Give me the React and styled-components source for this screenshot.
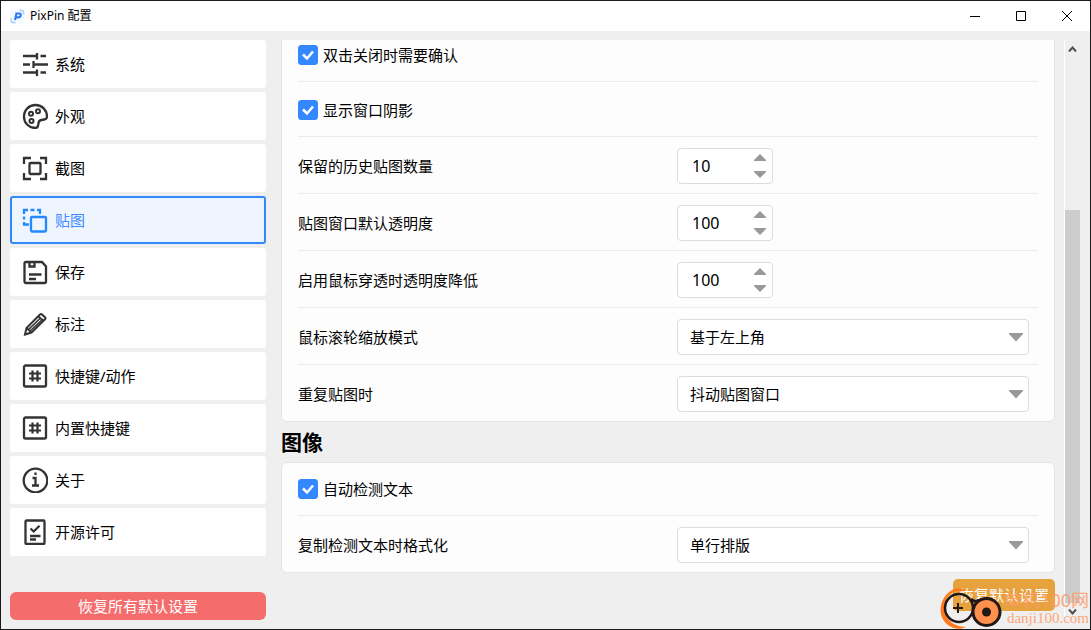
import React, { useState } from "react";
import styled, { createGlobalStyle, css } from "styled-components";

const GlobalStyle = createGlobalStyle`
  *, *::before, *::after { box-sizing: border-box; }
  body {
    margin: 0;
    font-family: "Noto Sans", "Noto Sans CJK SC", sans-serif;
    font-size: 15px;
    line-height: 20px;
    color: #000;
  }
  button, input, select { font: inherit; color: inherit; }
`;

const Window = styled.div`
  position: relative;
  height: 100vh;
  display: flex;
  flex-direction: column;
  border: 1px solid #1a1a1a;
  background: #efefef;
  overflow: hidden;
`;

const TitleBar = styled.header`
  flex: none;
  height: 30px;
  display: flex;
  align-items: center;
  gap: 5px;
  padding-left: 9px;
  background: #fff;
`;

const Title = styled.h1`
  flex: 1;
  margin: 0;
  font-size: 12px;
  font-weight: 400;
`;

const WindowButtons = styled.div`
  display: flex;
`;

const WindowButton = styled.button`
  width: 46px;
  height: 30px;
  padding: 0;
  border: 0;
  background: none;
  display: grid;
  place-items: center;
`;

const Body = styled.div`
  flex: 1;
  min-height: 0;
  display: flex;
  padding: 9px;
`;

const Sidebar = styled.aside`
  flex: none;
  width: 256px;
  display: flex;
  flex-direction: column;
  justify-content: space-between;
  margin-right: 15px;
`;

const Nav = styled.nav`
  display: flex;
  flex-direction: column;
  gap: 4px;
`;

const NavItem = styled.button`
  display: flex;
  align-items: center;
  gap: 7px;
  height: 48px;
  padding: 0 10px;
  border: 2px solid #fff;
  border-radius: 3px;
  background: #fff;
  text-align: left;
  svg { flex: none; color: #333; }
  ${(p) =>
    p.$active &&
    css`
      border-color: #3388ff;
      background: #eef5ff;
      color: #3f8cff;
      svg { color: #2488ff; }
    `}
`;

const ResetAll = styled.button`
  height: 28px;
  padding: 0;
  border: 0;
  border-radius: 6px;
  background: #f56c6c;
  color: #fff;
`;

const Pane = styled.main`
  flex: 1;
  min-width: 0;
  display: flex;
  flex-direction: column-reverse;
  overflow-y: auto;
  scrollbar-width: none;
  margin-right: 9px;
`;

const PaneContent = styled.div`
  display: flex;
  flex-direction: column;
  padding-bottom: 9px;
`;

const Card = styled.section`
  display: flex;
  flex-direction: column;
  gap: 2px;
  padding: 0 16px;
  border: 1px solid #e4e4e4;
  border-radius: 6px;
  background: #fdfdfd;
`;

const SectionTitle = styled.h2`
  margin: 0;
  font-size: 21px;
  line-height: 40px;
  font-weight: 700;
`;

const Row = styled.div`
  display: grid;
  grid-template-columns: 379fr 352fr;
  align-items: center;
  padding: 9px 9px 9px 0;
  &:not(:last-child) { border-bottom: 1px solid #ebebeb; }
`;

const CheckRow = styled.label`
  display: flex;
  align-items: center;
  gap: 5px;
  padding: 16px 0;
  border-bottom: 1px solid #ebebeb;
`;

const CheckMark = styled.span`
  position: relative;
  width: 20px;
  height: 20px;
  input {
    appearance: none;
    display: block;
    width: 20px;
    height: 20px;
    margin: 0;
    border: 1px solid #3388ff;
    border-radius: 3px;
    background: #fff;
  }
  input:checked { background: #3388ff; }
  svg {
    position: absolute;
    inset: 0;
    pointer-events: none;
  }
`;

const Spin = styled.div`
  width: 96px;
  height: 36px;
  display: flex;
  border: 1px solid #dcdcdc;
  border-radius: 4px;
  background: #fff;
`;

const SpinInput = styled.input`
  flex: 1;
  min-width: 0;
  padding: 0 0 0 14px;
  border: 0;
  outline: 0;
  background: none;
  font-size: 16px;
`;

const SpinButtons = styled.div`
  display: flex;
  flex-direction: column;
  width: 24px;
`;

const SpinButton = styled.button`
  flex: 1;
  padding: 0;
  border: 0;
  background: none;
  display: grid;
  place-items: center;
`;

const SelectBox = styled.div`
  position: relative;
  select {
    appearance: none;
    display: block;
    width: 100%;
    height: 36px;
    padding: 0 32px 0 12px;
    border: 1px solid #dcdcdc;
    border-radius: 4px;
    background: #fff;
  }
  svg {
    position: absolute;
    right: 5px;
    top: 14px;
    pointer-events: none;
  }
`;

const ResetPage = styled.button`
  align-self: flex-end;
  height: 32px;
  margin-top: 6px;
  padding: 0 6px;
  border: 0;
  border-radius: 5px;
  background: #e6a23c;
  color: #fff;
`;

const ScrollTrack = styled.div`
  flex: none;
  width: 17px;
  display: flex;
  flex-direction: column;
  border-left: 1px solid #fff;
`;

const ScrollArrow = styled.button`
  width: 15px;
  height: 17px;
  padding: 0;
  border: 0;
  background: none;
  display: grid;
  place-items: center;
`;

const ScrollSpace = styled.div`
  flex: 153;
`;

const ScrollThumb = styled.div`
  flex: 393;
  width: 15px;
  background: #cdcdcd;
`;

const Watermark = styled.div`
  position: absolute;
  right: 1px;
  bottom: 0;
  display: flex;
  align-items: center;
  pointer-events: none;
`;

const WatermarkText = styled.div`
  display: flex;
  flex-direction: column;
  align-items: flex-end;
  color: #ff9a66;
  opacity: 0.85;
  strong { font-size: 18px; line-height: 20px; font-weight: 400; }
  span { font-family: "Liberation Serif", serif; font-size: 15px; line-height: 16px; }
`;

const Icon = ({ children }) => (
  <svg width="26" height="26" viewBox="0 0 26 26" fill="none" stroke="currentColor" strokeWidth="2.3" aria-hidden="true">
    {children}
  </svg>
);

const HashIcon = () => (
  <Icon>
    <rect x="2" y="2.5" width="22" height="21" rx="1.5" />
    <path d="M10.5 7.5v11M15.5 7.5v11M7 10.500h12M7 15.500h12" strokeWidth="2.200" />
  </Icon>
);

const icons = {
  system: (
    <Icon>
      <path d="M1 5h14M18.500 5H24M15 2v6.500M1 13.500h7M11.500 13.500H26M11.500 10v7M1 21.500h14M18.500 21.500H24M15 18.500V25" />
    </Icon>
  ),
  look: (
    <Icon>
      <path d="M13.500 25C7 25 2 20 2 13.700 2 7 7 2 13.500 2 20 2 25 7 25 13.500c0 1.800-1 2.800-2.700 3l-3 .5c-1.800.3-2.500 1.200-2.800 3l-.3 2.200c-.2 1.800-1.200 2.800-2.900 2.800z" />
      <circle cx="9" cy="10.700" r="2" strokeWidth="2" />
      <circle cx="16" cy="8.200" r="2" strokeWidth="2" />
      <circle cx="9.500" cy="18" r="2" strokeWidth="2" />
    </Icon>
  ),
  shot: (
    <Icon>
      <path d="M2 9V3h7M18 3h6v6M24 18v6h-6M9 24H2v-6" />
      <rect x="7.500" y="8" width="11" height="11" rx="1" />
    </Icon>
  ),
  pin: (
    <Icon>
      <path d="M2 7V3h4M8.500 3h4M15 3h3v4M2 9.500v3M2 15v2.500h5" />
      <rect x="9" y="10" width="15" height="14.500" rx="1" />
    </Icon>
  ),
  save: (
    <Icon>
      <path d="M4 3h16l4 4.500v15q0 1.500-1.500 1.500H4q-1.500 0-1.500-1.500v-18Q2.500 3 4 3z" />
      <path d="M7.500 3v4.500h5V3M7 15.500h12.500M7 20h7" />
    </Icon>
  ),
  pen: (
    <Icon>
      <path d="M3 23.500l1.500-6.500L18 3.500q1-1 2 0l3 2.800q1 1 0 2L9.500 21.500z" strokeWidth="2" />
      <path d="M4.500 17l5 4.500M6.500 18.500L19 6.500M8 20L21 8M16 5l5.500 5M3 23.500l3-1" strokeWidth="1.700" />
    </Icon>
  ),
  hash: <HashIcon />,
  info: (
    <Icon>
      <circle cx="13.500" cy="13.500" r="11.800" />
      <path d="M10.500 11h3v7.500M10 18.500h7M13.500 5.500V8" />
    </Icon>
  ),
  license: (
    <Icon>
      <rect x="3.500" y="1.500" width="19" height="23.500" rx="1" />
      <path d="M8.500 9.500l3.200 3 5.800-5.800M8 17h10.500M8 20.500h6" />
    </Icon>
  ),
};

const navItems = [
  ["系统", "system"],
  ["外观", "look"],
  ["截图", "shot"],
  ["贴图", "pin"],
  ["保存", "save"],
  ["标注", "pen"],
  ["快捷键/动作", "hash"],
  ["内置快捷键", "hash"],
  ["关于", "info"],
  ["开源许可", "license"],
];

function Check({ children }) {
  return (
    <CheckRow>
      <CheckMark>
        <input type="checkbox" defaultChecked />
        <svg width="20" height="20" viewBox="0 0 20 20" fill="none" stroke="#fff" strokeWidth="2.5" aria-hidden="true">
          <path d="M5 9.500l4 4 6-7" />
        </svg>
      </CheckMark>
      {children}
    </CheckRow>
  );
}

function NumberField({ id, label, initial }) {
  const [value, setValue] = useState(initial);
  return (
    <Row>
      <label htmlFor={id}>{label}</label>
      <Spin>
        <SpinInput id={id} inputMode="numeric" value={value} onChange={(e) => setValue(Number(e.target.value) || 0)} />
        <SpinButtons>
          <SpinButton aria-label="增加" onClick={() => setValue(value + 1)}>
            <svg width="12" height="7" viewBox="0 0 12 7"><path d="M6 0l6 6v1H0V6z" fill="#999" /></svg>
          </SpinButton>
          <SpinButton aria-label="减少" onClick={() => setValue(value - 1)}>
            <svg width="12" height="7" viewBox="0 0 12 7"><path d="M0 0h12v1L6 7 0 1z" fill="#999" /></svg>
          </SpinButton>
        </SpinButtons>
      </Spin>
    </Row>
  );
}

function SelectField({ id, label, value }) {
  return (
    <Row>
      <label htmlFor={id}>{label}</label>
      <SelectBox>
        <select id={id} defaultValue={value}>
          <option>{value}</option>
        </select>
        <svg width="16" height="9" viewBox="0 0 16 9" aria-hidden="true">
          <path d="M1 0h14v1L8 8.500 1 1z" fill="#999" />
        </svg>
      </SelectBox>
    </Row>
  );
}

export default function App() {
  const [active, setActive] = useState("贴图");
  return (
    <Window>
      <GlobalStyle />
      <TitleBar>
        <svg width="15" height="15" viewBox="0 0 15 15" fill="none" aria-hidden="true">
          <rect x="0.500" y="0.500" width="14" height="14" rx="3" fill="#f6f9ff" />
          <path d="M9.500 1.500h2q2 0 2 2v2M1 9v2.500q0 2 2 2h2.500" stroke="#b5d3ff" strokeWidth="1.800" />
          <path d="M5 11l1.400-6.500H9q2 .1 1.700 1.900Q10.300 8.300 8.300 8.300H6" stroke="#2f7df6" strokeWidth="2.200" />
        </svg>
        <Title>PixPin 配置</Title>
        <WindowButtons>
          <WindowButton aria-label="最小化">
            <svg width="10" height="10" stroke="#000"><path d="M0 5.500h10" /></svg>
          </WindowButton>
          <WindowButton aria-label="最大化">
            <svg width="10" height="10" fill="none" stroke="#000"><path d="M.5.5h9v9h-9z" /></svg>
          </WindowButton>
          <WindowButton aria-label="关闭">
            <svg width="10" height="10" stroke="#000"><path d="M0 0l10 10M10 0L0 10" /></svg>
          </WindowButton>
        </WindowButtons>
      </TitleBar>
      <Body>
        <Sidebar>
          <Nav>
            {navItems.map(([label, icon]) => (
              <NavItem key={label} $active={label === active} onClick={() => setActive(label)}>
                {icons[icon]}
                {label}
              </NavItem>
            ))}
          </Nav>
          <ResetAll>恢复所有默认设置</ResetAll>
        </Sidebar>
        <Pane>
          <PaneContent>
            <Card>
              <Check>双击关闭时需要确认</Check>
              <Check>显示窗口阴影</Check>
              <NumberField id="history" label="保留的历史贴图数量" initial={10} />
              <NumberField id="opacity" label="贴图窗口默认透明度" initial={100} />
              <NumberField id="through" label="启用鼠标穿透时透明度降低" initial={100} />
              <SelectField id="wheel" label="鼠标滚轮缩放模式" value="基于左上角" />
              <SelectField id="repeat" label="重复贴图时" value="抖动贴图窗口" />
            </Card>
            <SectionTitle>图像</SectionTitle>
            <Card>
              <Check>自动检测文本</Check>
              <SelectField id="format" label="复制检测文本时格式化" value="单行排版" />
            </Card>
            <ResetPage>恢复默认设置</ResetPage>
          </PaneContent>
        </Pane>
        <ScrollTrack>
          <ScrollArrow aria-label="向上滚动">
            <svg width="9" height="6" fill="none" stroke="#505050" strokeWidth="2"><path d="M1 5.500l3.500-4 3.500 4" /></svg>
          </ScrollArrow>
          <ScrollSpace />
          <ScrollThumb />
          <ScrollArrow aria-label="向下滚动">
            <svg width="9" height="6" fill="none" stroke="#505050" strokeWidth="2"><path d="M1 .5l3.500 4L8 .5" /></svg>
          </ScrollArrow>
        </ScrollTrack>
      </Body>
      <Watermark>
        <svg width="66" height="42" viewBox="0 0 66 42" fill="none" aria-hidden="true">
          <path d="M28 4C22-1 14 1 8 8 0 18 1 31 10 38c5 4 12 5 18 2-9 0-17-4-20-12C4 17 9 6 20 4z" fill="#ff7a1a" />
          <circle cx="21" cy="21" r="14" stroke="#231815" strokeWidth="2.500" />
          <path d="M20 16v10M15 21h10" stroke="#231815" strokeWidth="2" />
          <circle cx="48.500" cy="25" r="13.500" fill="#ff914d" stroke="#231815" strokeWidth="3" />
          <circle cx="48.500" cy="25" r="4.500" fill="#231815" />
          <path d="M33 12q3 4 8 1" stroke="#231815" strokeWidth="3" />
        </svg>
        <WatermarkText>
          <strong>单机100网</strong>
          <span>danji100.com</span>
        </WatermarkText>
      </Watermark>
    </Window>
  );
}
